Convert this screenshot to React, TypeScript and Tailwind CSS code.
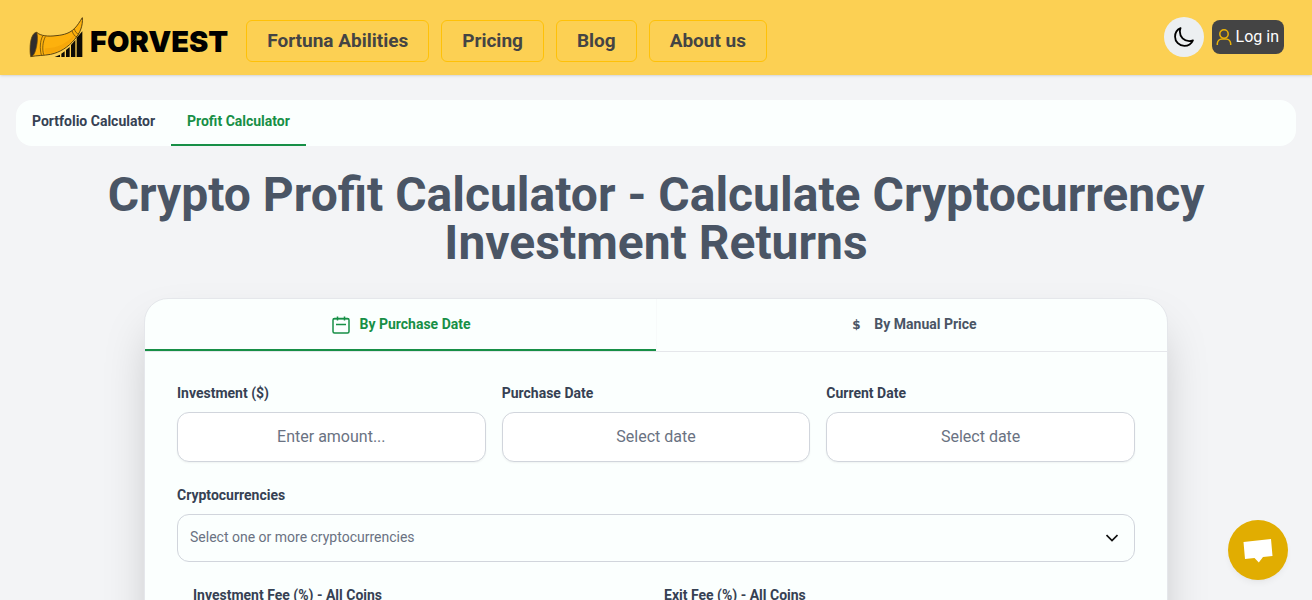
import React from "react";

const navItems = ["Fortuna Abilities", "Pricing", "Blog", "About us"];

const fields = [
  { id: "investment", label: "Investment ($)", placeholder: "Enter amount..." },
  { id: "purchase-date", label: "Purchase Date", placeholder: "Select date" },
  { id: "current-date", label: "Current Date", placeholder: "Select date" },
];

const fees = [
  { id: "investment-fee", label: "Investment Fee (%) - All Coins" },
  { id: "exit-fee", label: "Exit Fee (%) - All Coins" },
];

function HornLogo() {
  return (
    <svg viewBox="27 36 165 123" className="h-[41px] w-[55px]" aria-hidden="true">
      <path d="M104 156 L120 149 V156 Z M124 156 V146 L134 139 V156 Z M138 156 V135 L149 126 V156 Z M153 156 V120 L166 105 V156 Z M170 156 V98 L187 79 V156 Z" fill="#0c0a05" />
      <path d="M50 82 C62 93 84 95 108 92 C134 90 151 83 163 71 C174 60 179 50 187 38 C189 61 181 84 164 103 C144 127 120 142 92 148 C71 152 50 151 32 155 Z" fill="#fdb10d" stroke="#3c2b08" strokeWidth="2.5" strokeLinejoin="round" />
      <path d="M76 130 C110 130 143 116 167 84 C160 112 126 138 87 146 C74 148 72 138 76 130 Z" fill="#f2a007" opacity=".6" />
      <path d="M68 93 C60 109 59 130 64 150 M76 95 C68 111 66 132 71 149 M156 77 C159 87 164 95 171 95 M163 71 C165 80 170 87 177 87" fill="none" stroke="#49350a" strokeWidth="2" />
      <path d="M50 82 C37 82 30 106 30 132 C30 147 31 155 36 154 C47 150 57 102 50 82 Z" fill="#302d2d" stroke="#65490b" strokeWidth="2" />
    </svg>
  );
}

function MoonIcon() {
  return (
    <svg viewBox="0 0 512 512" className="size-[22px]" fill="none" stroke="currentColor" strokeWidth="42" strokeLinejoin="round" strokeLinecap="round" aria-hidden="true">
      <path d="M160 136c0-30.62 4.51-61.61 16-88C99.57 81.27 48 159.32 48 248c0 119.29 96.71 216 216 216 88.68 0 166.73-51.57 200-128-26.39 11.49-57.38 16-88 16-119.29 0-216-96.71-216-216z" />
    </svg>
  );
}

function UserIcon() {
  return (
    <svg viewBox="0 0 16 16" className="size-4" fill="none" stroke="#eab308" strokeWidth="1.5" aria-hidden="true">
      <circle cx="8" cy="5" r="4.2" />
      <path d="M1.3 16v-1.5A4.8 4.8 0 0 1 6 10h4a4.8 4.8 0 0 1 4.7 4.5V16" />
    </svg>
  );
}

function CalendarIcon() {
  return (
    <svg viewBox="0 0 18 18" className="size-[18px]" fill="none" stroke="currentColor" strokeWidth="1.5" aria-hidden="true">
      <rect x="1" y="2.5" width="16" height="14.5" rx="1.5" />
      <path d="M5.5 .5v4M12.5 .5v4M4 8.5h10" />
      <path d="M1 3h16" strokeWidth="1" />
    </svg>
  );
}

export default function App() {
  return (
    <div className="h-screen overflow-hidden bg-[#f3f4f6] font-['Roboto',sans-serif] text-[#364153]">
      <header className="relative flex h-[75px] items-center bg-[#fcd053] pr-7 pl-[29px] shadow-sm">
        <a href="#home" className="mr-[18px] flex items-center gap-1.5 text-black">
          <HornLogo />
          <span className="pt-2 font-['Inter',sans-serif] text-[29px] leading-8 font-black">FORVEST</span>
        </a>
        <nav className="flex gap-3 pt-[7px]">
          {navItems.map((item) => (
            <a key={item} href="#nav" className="flex h-[42px] items-center rounded-md border border-[#ffc107] px-5 text-[19px] font-bold text-[#444]">
              {item}
            </a>
          ))}
        </nav>
        <div className="ml-auto flex items-center gap-2 pb-0.5">
          <button type="button" aria-label="Dark mode" className="flex size-10 items-center justify-center rounded-full bg-[#eceff1] text-black">
            <MoonIcon />
          </button>
          <a href="#login" className="flex h-[34px] items-center gap-1 rounded-lg bg-[#444] pr-[5px] pl-1 text-base text-white">
            <UserIcon />
            Log in
          </a>
        </div>
      </header>

      <main className="px-4 pt-[25px]">
        <nav className="flex h-[46px] rounded-2xl bg-[#fbfffe] text-sm font-bold">
          <a href="#portfolio" className="px-4 pt-[11px]">Portfolio Calculator</a>
          <a href="#profit" className="border-b-2 border-[#178f46] px-4 pt-[11px] text-[#178f46]">Profit Calculator</a>
        </nav>

        <h1 className="px-8 pt-[25px] pb-[31px] text-center text-5xl leading-none font-bold text-[#4a5565]">
          Crypto Profit Calculator - Calculate Cryptocurrency Investment Returns
        </h1>

        <section className="mx-auto max-w-[1024px] overflow-hidden rounded-3xl border border-[#e5e7eb] bg-[#fbfffe] shadow-2xl">
          <div className="grid h-[53px] grid-cols-2 border-b border-[#e5e7eb] text-sm font-bold" role="tablist">
            <button type="button" role="tab" aria-selected="true" className="flex items-center justify-center gap-[9px] border-b-2 border-[#178f46] pl-0.5 text-[#178f46]">
              <span className="pt-0.5"><CalendarIcon /></span>
              By Purchase Date
            </button>
            <button type="button" role="tab" aria-selected="false" className="flex items-center justify-center gap-[9px] border-b-2 border-l border-b-transparent border-l-[#f7fafa] text-[#4a5565]">
              <span className="w-[18px] pt-0.5 text-center font-['DejaVu_Sans',sans-serif] text-xs font-bold" aria-hidden="true">$</span>
              By Manual Price
            </button>
          </div>

          <form className="px-8 pt-[31px] pb-8">
            <div className="grid grid-cols-3 gap-4">
              {fields.map((field) => (
                <div key={field.id} className="flex flex-col gap-[9px]">
                  <label htmlFor={field.id} className="text-sm font-bold">{field.label}</label>
                  <input id={field.id} type="text" placeholder={field.placeholder} className="h-[50px] w-full rounded-xl border border-[#d1d5dc] bg-white px-3 pb-0.5 text-center text-base shadow-xs placeholder:text-[#6a7282]" />
                </div>
              ))}
            </div>

            <div className="mt-[23px] flex flex-col gap-[9px]">
              <label htmlFor="coins" className="text-sm font-bold">Cryptocurrencies</label>
              <div className="grid items-center">
                <select id="coins" className="col-start-1 row-start-1 h-12 w-full appearance-none rounded-xl border border-[#d1d5dc] bg-[#fbfffe] px-3 pb-0.5 text-sm text-[#6a7282]">
                  <option>Select one or more cryptocurrencies</option>
                </select>
                <svg viewBox="0 0 12 8" className="pointer-events-none col-start-1 row-start-1 mr-[17px] h-2 w-3 justify-self-end" fill="none" stroke="#111" strokeWidth="1.7" aria-hidden="true">
                  <path d="M.5 1 6 6.5 11.500 1" />
                </svg>
              </div>
            </div>

            <div className="mt-[23px] grid grid-cols-2 gap-4 px-4">
              {fees.map((fee) => (
                <div key={fee.id} className="flex flex-col gap-[9px]">
                  <label htmlFor={fee.id} className="text-sm font-bold">{fee.label}</label>
                  <input id={fee.id} type="text" className="h-[50px] w-full rounded-xl border border-[#d1d5dc] bg-white px-3 text-center text-base shadow-xs" />
                </div>
              ))}
            </div>
          </form>
        </section>
      </main>

      <button type="button" aria-label="Open chat" className="fixed right-6 bottom-5 flex size-[60px] items-center justify-center rounded-full bg-[#e1ad01] pt-0.5 shadow-md shadow-black/5">
        <svg viewBox="0 0 30 24" className="h-6 w-[30px]" fill="#fff" aria-hidden="true">
          <path d="M.5 3 28 0 29.500 17 20 18 15.800 23.500 11.500 19 2 20 Z" />
        </svg>
      </button>
    </div>
  );
}
